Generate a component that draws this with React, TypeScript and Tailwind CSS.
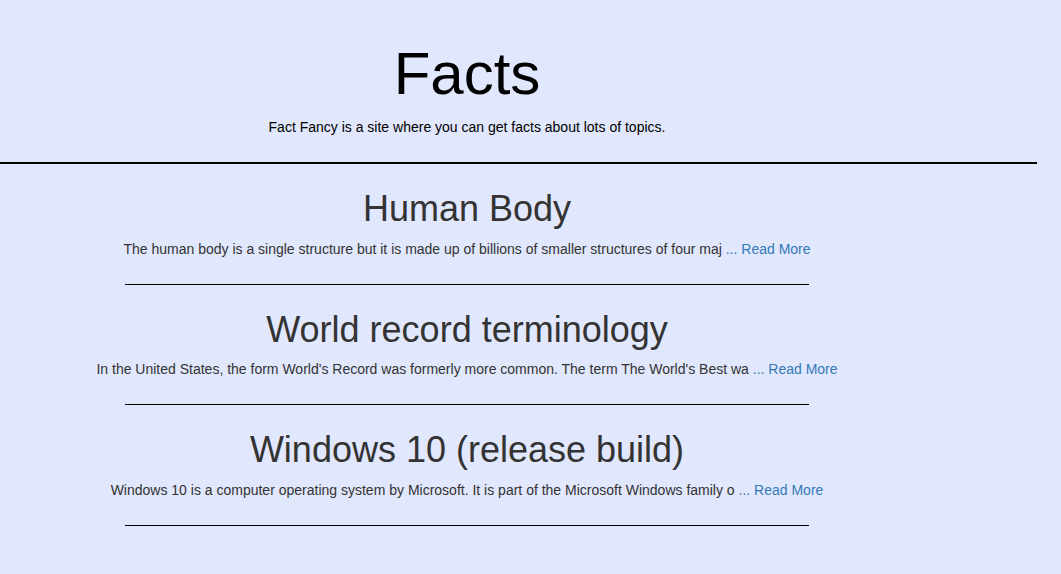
const facts = [
  {
    title: "Human Body",
    text: "The human body is a single structure but it is made up of billions of smaller structures of four maj",
  },
  {
    title: "World record terminology",
    text: "In the United States, the form World's Record was formerly more common. The term The World's Best wa",
  },
  {
    title: "Windows 10 (release build)",
    text: "Windows 10 is a computer operating system by Microsoft. It is part of the Microsoft Windows family o",
  },
];

function FactItem({ title, text }: { title: string; text: string }) {
  return (
    <div className="flex flex-col items-center">
      <h2 className="mt-[25px] text-[36px] leading-[39.6px] font-normal text-[#333]">{title}</h2>
      <p className="mt-[10px] text-[14px] leading-[20px] text-[#333]">
        {text}{" "}
        <a href="#" className="text-[#337ab7]">... Read More</a>
      </p>
      <hr className="mt-[25px] w-[684px] border-0 border-t border-black" />
    </div>
  );
}

export default function App() {
  return (
    <div className="min-h-screen w-full bg-[#e1e7fc] font-['Liberation_Sans',Arial,sans-serif]">
      <div className="w-[1037px]">
        <header className="w-[934px] pt-[41px] text-center text-black">
          <h1 className="text-[60px] leading-[66px] font-normal">Facts</h1>
          <p className="mt-[10px] text-[14px] leading-[20px]">Fact Fancy is a site where you can get facts about lots of topics.</p>
        </header>
        <hr className="mt-[25px] border-0 border-t-2 border-black" />
        <main className="w-[934px] text-center">
          {facts.map((f) => (
            <FactItem key={f.title} title={f.title} text={f.text} />
          ))}
        </main>
      </div>
    </div>
  );
}
